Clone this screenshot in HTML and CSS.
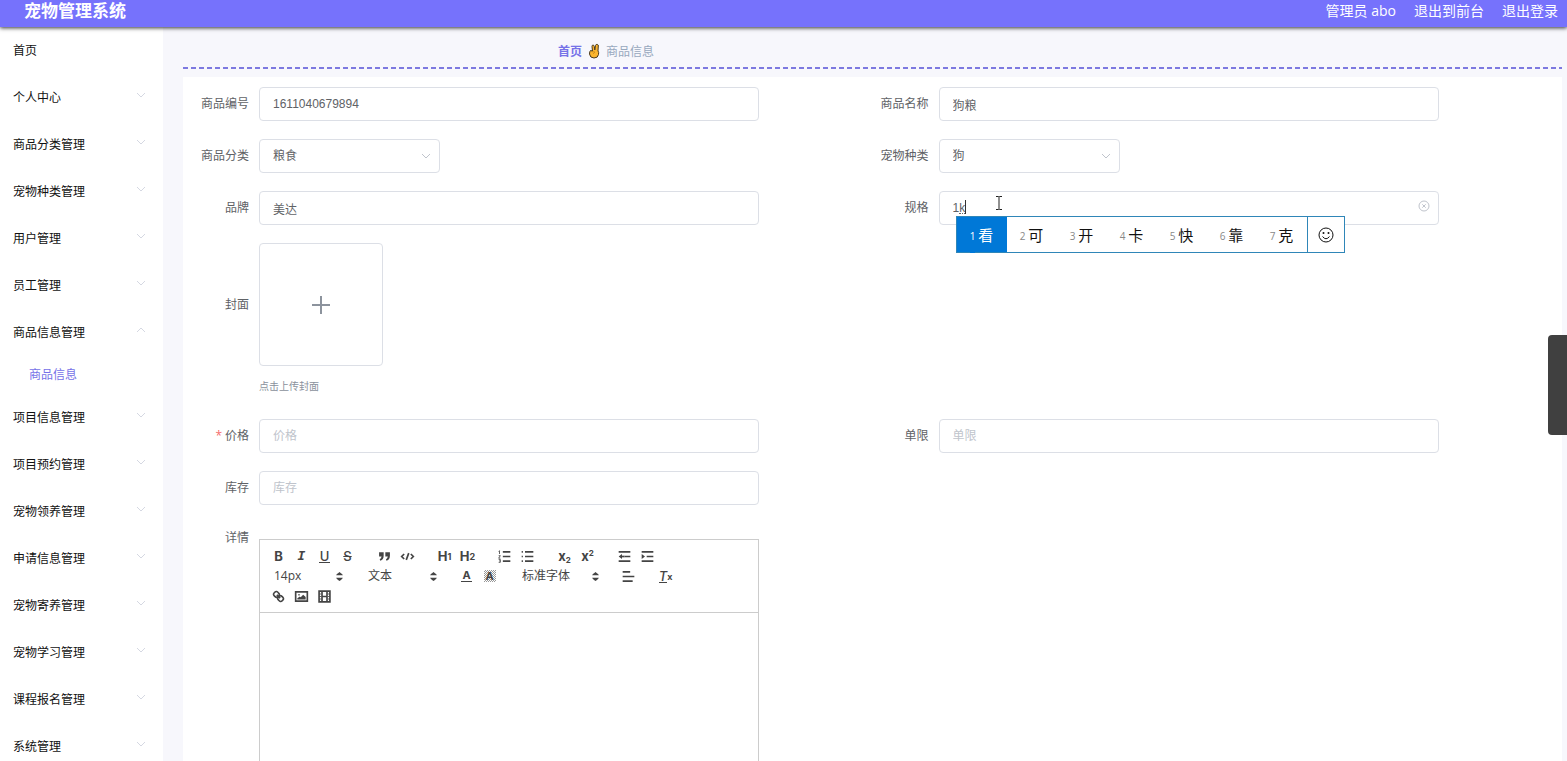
FILE: index.html
```html
<!DOCTYPE html>
<html lang="zh-CN">
<head>
    <meta charset="UTF-8">
    <meta name="viewport" content="width=device-width, initial-scale=1.0">
    <title>宠物管理系统</title>
    <link rel="stylesheet" href="styles.css">
</head>
<body>
    <svg class="sprite" aria-hidden="true">
        <symbol id="down" viewBox="0 0 10 10"><path d="M1 3l4 4 4-4"/></symbol>
        <symbol id="up" viewBox="0 0 10 10"><path d="M1 7l4-4 4 4"/></symbol>
        <symbol id="sort" viewBox="0 0 18 18"><path d="M5 10.500h8q0 1-4 4-4-3-4-4zM5 7.500h8q0-1-4-4-4 3-4 4z"/></symbol>
    </svg>
    <header class="header">
        <h1>宠物管理系统</h1>
        <nav class="header-links">
            <span>管理员 abo</span>
            <a href="#">退出到前台</a>
            <a href="#">退出登录</a>
        </nav>
    </header>
    <div class="layout">
        <nav class="menu">
            <a href="#" class="home">首页</a>
            <a href="#">个人中心<svg><use href="#down"/></svg></a>
            <a href="#">商品分类管理<svg><use href="#down"/></svg></a>
            <a href="#">宠物种类管理<svg><use href="#down"/></svg></a>
            <a href="#">用户管理<svg><use href="#down"/></svg></a>
            <a href="#">员工管理<svg><use href="#down"/></svg></a>
            <a href="#">商品信息管理<svg><use href="#up"/></svg></a>
            <a href="#" class="sub">商品信息</a>
            <a href="#">项目信息管理<svg><use href="#down"/></svg></a>
            <a href="#">项目预约管理<svg><use href="#down"/></svg></a>
            <a href="#">宠物领养管理<svg><use href="#down"/></svg></a>
            <a href="#">申请信息管理<svg><use href="#down"/></svg></a>
            <a href="#">宠物寄养管理<svg><use href="#down"/></svg></a>
            <a href="#">宠物学习管理<svg><use href="#down"/></svg></a>
            <a href="#">课程报名管理<svg><use href="#down"/></svg></a>
            <a href="#">系统管理<svg><use href="#down"/></svg></a>
        </nav>
        <main class="main">
            <div class="breadcrumb">
                <a href="#">首页</a>
                <svg class="hand" viewBox="0 0 12 16">
                    <path d="M4.500 8L4 3.500Q4 2 5 2T6.300 3.500L6.800 7l.7-4.500Q8 1 9.300 1.400T10.300 3L10 8Q11 9 10.500 11.500 10 15 6 15 2 15 1.500 11 1.500 8.500 2.500 7.500z" fill="#fbb52e" stroke="#4a3b20" stroke-width="1"/>
                    <path d="M3 8.500l4 .5M5 11l2-2" fill="none" stroke="#c98a1c" stroke-width=".8"/>
                </svg>
                <span>商品信息</span>
            </div>
            <form class="form">
                <div class="item">
                    <label for="code">商品编号</label>
                    <div class="field"><input type="text" id="code" value="1611040679894"></div>
                </div>
                <div class="item">
                    <label for="name">商品名称</label>
                    <div class="field"><input type="text" id="name" value="狗粮"></div>
                </div>
                <div class="item">
                    <label for="category">商品分类</label>
                    <div class="field select">
                        <select id="category"><option>粮食</option></select>
                        <svg><use href="#down"/></svg>
                    </div>
                </div>
                <div class="item">
                    <label for="pet">宠物种类</label>
                    <div class="field select">
                        <select id="pet"><option>狗</option></select>
                        <svg><use href="#down"/></svg>
                    </div>
                </div>
                <div class="item">
                    <label for="brand">品牌</label>
                    <div class="field"><input type="text" id="brand" value="美达"></div>
                </div>
                <div class="item">
                    <label for="spec">规格</label>
                    <div class="field">
                        <input type="text" id="spec" value="1k">
                        <span class="caret"></span>
                        <svg class="pointer" viewBox="0 0 8 14"><path d="M1 .5h2.500L4 1l.5-.5H7M4 1v12M1 13.500h2.500L4 13l.5.5H7"/></svg>
                        <button type="button" class="clear" aria-label="清空">
                            <svg viewBox="0 0 12 12"><circle cx="6" cy="6" r="5"/><path d="M4.300 4.300l3.400 3.400M7.700 4.300L4.300 7.700"/></svg>
                        </button>
                        <div class="ime">
                            <span class="active"><i>1</i>看</span>
                            <span><i>2</i>可</span>
                            <span><i>3</i>开</span>
                            <span><i>4</i>卡</span>
                            <span><i>5</i>快</span>
                            <span><i>6</i>靠</span>
                            <span><i>7</i>克</span>
                            <button type="button" aria-label="表情">
                                <svg viewBox="0 0 16 16"><circle cx="8" cy="8" r="7"/><path d="M4.500 9.500Q8 14 11.500 9.500"/><circle class="eye" cx="5.500" cy="6" r="1"/><circle class="eye" cx="10.500" cy="6" r="1"/></svg>
                            </button>
                        </div>
                    </div>
                </div>
                <div class="item cover">
                    <span class="label">封面</span>
                    <div class="field">
                        <button type="button" class="upload" aria-label="上传封面">
                            <svg viewBox="0 0 20 20"><path d="M10 1v18M1 10h18"/></svg>
                        </button>
                        <p>点击上传封面</p>
                    </div>
                </div>
                <div class="item">
                    <label for="price" class="required">价格</label>
                    <div class="field"><input type="text" id="price" placeholder="价格"></div>
                </div>
                <div class="item">
                    <label for="limit">单限</label>
                    <div class="field"><input type="text" id="limit" placeholder="单限"></div>
                </div>
                <div class="item wide">
                    <label for="stock">库存</label>
                    <div class="field"><input type="text" id="stock" placeholder="库存"></div>
                </div>
                <div class="item wide detail">
                    <label for="detail">详情</label>
                    <div class="field editor">
                        <div class="toolbar">
                            <div class="tools">
                                <div class="group">
                                    <button type="button">B</button>
                                    <button type="button" class="italic">I</button>
                                    <button type="button"><span class="underline">U</span></button>
                                    <button type="button" class="strike"><s>S</s></button>
                                </div>
                                <div class="group">
                                    <button type="button" aria-label="引用"><svg viewBox="0 0 18 18"><g class="solid"><path d="M2.500 4h5.500V8q0 4.500-4 6l-.8-1.500Q5.300 11 5.500 9h-3zM10 4h5.500V8q0 4.500-4 6l-.8-1.500Q12.800 11 13 9h-3z"/></g></svg></button>
                                    <button type="button" aria-label="代码"><svg viewBox="0 0 18 18"><path d="M5 6L2 9l3 3M13 6l3 3-3 3M10.500 5l-3 8"/></svg></button>
                                </div>
                                <div class="group">
                                    <button type="button">H<small>1</small></button>
                                    <button type="button">H<small>2</small></button>
                                </div>
                                <div class="group">
                                    <button type="button" aria-label="有序列表"><svg viewBox="0 0 18 18"><path d="M7 3.500h9M7 9h9M7 14.500h9"/><g class="thin"><path d="M2 3l1-1v4M2 8h2l-2 3h2M2 12.500h2v3.500H2M2.500 14.300H4"/></g></svg></button>
                                    <button type="button" aria-label="无序列表"><svg viewBox="0 0 18 18"><path d="M6 3.500h10M6 9h10M6 14.500h10M2 3.500h1.500M2 9h1.500M2 14.500h1.500"/></svg></button>
                                </div>
                                <div class="group">
                                    <button type="button">x<sub>2</sub></button>
                                    <button type="button">x<sup>2</sup></button>
                                </div>
                                <div class="group">
                                    <button type="button" aria-label="减少缩进"><svg viewBox="0 0 18 18"><path d="M2 3.500h14M9 9h7M2 14.500h14"/><g class="solid"><path d="M6 6v6L2 9z"/><path d="M5 8h4v2H5z"/></g></svg></button>
                                    <button type="button" aria-label="增加缩进"><svg viewBox="0 0 18 18"><path d="M2 3.500h14M8 9h8M2 14.500h14"/><g class="solid"><path d="M2 6v6l4-3z"/></g></svg></button>
                                </div>
                            </div>
                            <div class="tools">
                                <div class="picker">
                                    <select aria-label="字号"><option>14px</option></select>
                                    <svg><use href="#sort"/></svg>
                                </div>
                                <div class="picker">
                                    <select aria-label="标题"><option>文本</option></select>
                                    <svg><use href="#sort"/></svg>
                                </div>
                                <div class="group">
                                    <button type="button"><span class="color">A</span></button>
                                    <button type="button"><span class="hatch">A</span></button>
                                </div>
                                <div class="picker font">
                                    <select aria-label="字体"><option>标准字体</option></select>
                                    <svg><use href="#sort"/></svg>
                                </div>
                                <button type="button" aria-label="对齐"><svg viewBox="0 0 18 18"><path d="M2 3.500h9M2 9h14M2 14.500h12"/></svg></button>
                                <button type="button" class="clean" aria-label="清除格式"><span>T</span><small>x</small></button>
                            </div>
                            <div class="tools">
                                <div class="group">
                                    <button type="button" aria-label="链接"><svg viewBox="0 0 18 18"><path d="M7 7l4 4"/><path d="M8.900 4.600a3.500 3.500 0 0 1 .4 4.700 3.500 3.500 0 0 1-4.700-.4C3.200 7.500 2 6.400 4.200 4.200S7.500 3.200 8.900 4.600zM13.400 9.100a3.500 3.500 0 0 0-4.700-.4 3.500 3.500 0 0 0 .4 4.700c1.400 1.400 2.500 2.600 4.700.4s1-3.300-.4-4.700z"/></svg></button>
                                    <button type="button" aria-label="图片"><svg viewBox="0 0 18 18"><path d="M2 3.500h14v11H2z"/><g class="solid"><circle cx="6" cy="7" r="1"/><path d="M4 12.500V11l3-2 1 1 3-3 3 2.500v3z"/></g></svg></button>
                                    <button type="button" aria-label="视频"><svg viewBox="0 0 18 18"><path d="M2.500 2.500h13v13h-13zM6 3v12M12 3v12M6 9h6"/><g class="thin"><path d="M3 6h2M3 9h2M3 12h2M13 6h2M13 9h2M13 12h2"/></g></svg></button>
                                </div>
                            </div>
                        </div>
                        <textarea id="detail"></textarea>
                    </div>
                </div>
            </form>
        </main>
    </div>
    <button type="button" class="side-tab" aria-label="展开"></button>
</body>
</html>
```
FILE: styles.css
```css
* {
    box-sizing: border-box;
}
body {
    display: flex;
    flex-direction: column;
    height: 100vh;
    margin: 0;
    overflow: hidden;
    background: #f7f7fc;
    font-family: "Open Sans", "Noto Sans CJK SC", sans-serif;
    font-size: 12px;
    color: #606266;
}
a {
    color: inherit;
    text-decoration: none;
}
button {
    padding: 0;
    border: none;
    background: none;
    color: inherit;
    font: inherit;
}
svg {
    fill: none;
    stroke: currentColor;
}
.sprite {
    display: none;
}

/* top bar */
.header {
    display: flex;
    flex: none;
    justify-content: space-between;
    align-items: center;
    height: 27px;
    padding: 0 9px 5px 24px;
    background: #7672fc;
    color: #fff;
    box-shadow: 0 1px 4px rgba(0, 0, 0, 0.8);
    z-index: 1;
}
.header h1 {
    margin: 0;
    font-size: 17px;
    line-height: 22px;
}
.header-links {
    display: flex;
    gap: 18px;
    font-size: 14px;
    line-height: 22px;
}

/* left menu */
.layout {
    display: flex;
    flex: 1;
    min-height: 0;
}
.menu {
    flex: none;
    width: 163px;
    overflow: hidden;
    background: #fff;
    color: #111;
}
.menu a {
    display: flex;
    justify-content: space-between;
    align-items: center;
    height: 47px;
    padding: 0 17px 0 13px;
}
.menu .home {
    height: 46px;
}
.menu .sub {
    height: 38px;
    padding-left: 29px;
    color: #7672e8;
}
.menu svg {
    width: 10px;
    height: 10px;
    margin-bottom: 3px;
    color: #d5d8e2;
}

/* content */
.main {
    flex: 1;
    min-width: 0;
    padding: 0 5px 0 20px;
    overflow: hidden;
}
.breadcrumb {
    display: flex;
    align-items: center;
    gap: 6px;
    height: 42px;
    margin-bottom: 8px;
    padding: 6px 0 0 375px;
    background: repeating-linear-gradient(to right, #7d79e0 0 5px, transparent 5px 8px) bottom / 100% 2px no-repeat;
    color: #97a8be;
}
.breadcrumb a {
    color: #7672e8;
    font-weight: bold;
}
.hand {
    width: 12px;
    height: 16px;
}
.form {
    display: grid;
    grid-template-columns: 1fr 1fr;
    gap: 18px 0;
    padding: 10px;
    background: #fff;
}
.item {
    display: flex;
    gap: 10px;
    line-height: 34px;
}
.item > label,
.label {
    flex: none;
    width: 56px;
    text-align: right;
    white-space: nowrap;
}
.required::before {
    content: "*";
    margin-right: 3px;
    color: #f56c6c;
}
.wide,
.cover {
    grid-column: 1 / 3;
}
.field {
    position: relative;
    flex: 1;
    max-width: 500px;
}
.field > input,
.field > select {
    display: block;
    width: 100%;
    height: 34px;
    padding: 0 13px;
    border: 1px solid #dcdfe6;
    border-radius: 4px;
    outline: none;
    background: #fff;
    color: #606266;
    font-family: "Liberation Sans", "Noto Sans CJK SC", sans-serif;
    font-size: 12px;
}
.field > input::placeholder {
    color: #c0c4cc;
}
select {
    appearance: none;
}
.select {
    max-width: 181px;
}
.select svg {
    position: absolute;
    top: 12px;
    right: 9px;
    width: 10px;
    height: 10px;
    color: #c0c4cc;
}

/* typing state of the spec field */
.caret {
    position: absolute;
    top: 9px;
    left: 26px;
    width: 1px;
    height: 14px;
    background: #333;
}
.caret::after {
    content: "";
    position: absolute;
    right: 1px;
    bottom: 0;
    width: 6px;
    border-bottom: 1px dotted #606266;
}
.pointer {
    position: absolute;
    top: 5px;
    left: 56px;
    width: 8px;
    height: 14px;
    color: #222;
}
.clear {
    position: absolute;
    top: 9px;
    right: 9px;
    width: 12px;
    height: 12px;
    color: #c0c4cc;
}
.clear svg {
    display: block;
}
.ime {
    position: absolute;
    top: 25px;
    left: 17px;
    z-index: 2;
    display: flex;
    height: 37px;
    border: 1px solid #2f86b8;
    background: #fff;
    color: #111;
    font-size: 15px;
}
.ime span {
    display: flex;
    justify-content: center;
    align-items: center;
    gap: 3px;
    width: 50px;
}
.ime i {
    padding-top: 2px;
    color: #888;
    font-size: 10px;
    font-style: normal;
}
.ime .active,
.ime .active i {
    background: #0078d7;
    color: #fff;
}
.ime button {
    display: flex;
    justify-content: center;
    align-items: center;
    width: 37px;
    border-left: 1px solid #2f86b8;
}
.ime svg {
    width: 16px;
    height: 16px;
}
.eye {
    fill: currentColor;
    stroke: none;
}

/* cover upload */
.cover .label {
    line-height: 123px;
}
.upload {
    display: flex;
    justify-content: center;
    align-items: center;
    width: 124px;
    height: 123px;
    border: 1px solid #dcdfe6;
    border-radius: 4px;
    color: #8c939d;
}
.upload svg {
    width: 20px;
    height: 20px;
    stroke-width: 2;
}
.cover p {
    margin: 11px 0 6px;
    color: #8a919c;
    font-size: 10px;
    line-height: 18px;
}

/* rich text editor */
.detail label {
    line-height: 30px;
}
.editor {
    margin-top: 16px;
    border: 1px solid #ccc;
    color: #444;
}
.toolbar {
    padding: 6px 7px;
    border-bottom: 1px solid #ccc;
}
.tools {
    display: flex;
    gap: 14px;
    height: 20px;
    line-height: 20px;
}
.group {
    display: flex;
}
.tools button {
    display: flex;
    justify-content: center;
    align-items: center;
    width: 23px;
    height: 20px;
    font-family: Inter, sans-serif;
    font-size: 13px;
    font-weight: bold;
}
.tools button svg {
    width: 15px;
    height: 15px;
    stroke-width: 2;
}
.tools .thin {
    stroke-width: 1;
}
.tools .solid {
    fill: currentColor;
    stroke: none;
}
.tools .italic {
    font-family: "DejaVu Sans Mono", monospace;
    font-style: italic;
}
.tools .strike {
    font-weight: 500;
}
.underline,
.color {
    padding: 0 1px;
    border-bottom: 1px solid #444;
    font-weight: 500;
    line-height: 12px;
}
.color {
    font-size: 11px;
    font-weight: bold;
    line-height: 11px;
}
.hatch {
    width: 12px;
    background: repeating-conic-gradient(#999 0 25%, #fff 0 50%) 0 0 / 2px 2px;
    font-size: 11px;
    line-height: 12px;
    text-align: center;
}
.tools small {
    padding-top: 2px;
    font-size: 9px;
}
.tools sub,
.tools sup {
    font-size: 8px;
    line-height: 8px;
}
.tools sub {
    padding-top: 7px;
}
.tools sup {
    padding-bottom: 7px;
}
.clean span {
    border-bottom: 1px solid #444;
    font-style: italic;
    font-weight: 500;
    line-height: 12px;
}
.picker {
    position: relative;
    width: 80px;
}
.font {
    width: 88px;
}
.picker select {
    width: 100%;
    height: 20px;
    padding: 0 7px;
    border: none;
    background: none;
    color: #444;
    font: inherit;
}
.picker svg {
    position: absolute;
    top: 3px;
    right: 0;
    width: 15px;
    height: 15px;
    fill: currentColor;
    stroke: none;
}
.editor textarea {
    display: block;
    width: 100%;
    height: 300px;
    border: none;
    outline: none;
    resize: none;
}

/* drawer handle at the window edge */
.side-tab {
    position: absolute;
    top: 335px;
    right: 0;
    z-index: 3;
    width: 19px;
    height: 100px;
    border-radius: 4px 0 0 4px;
    background: #404040;
}
```
